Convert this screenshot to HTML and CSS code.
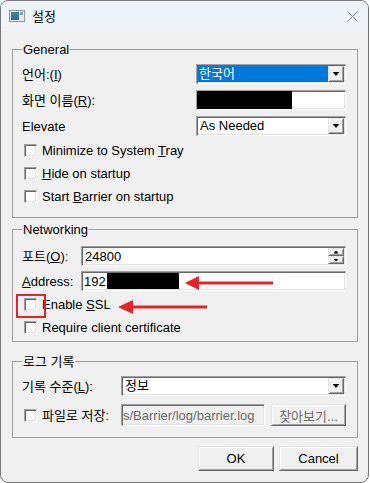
FILE: index.html
```html
<!DOCTYPE html>
<html lang="ko">
<head>
    <meta charset="UTF-8">
    <meta name="viewport" content="width=device-width, initial-scale=1.0">
    <title>설정</title>
    <link rel="stylesheet" href="styles.css">
</head>
<body>
    <div class="window">
        <div class="titlebar">
            <svg class="app-icon" width="16" height="12" viewBox="0 0 16 12">
                <defs>
                    <linearGradient id="ig" x1="0" y1="0" x2="0" y2="1">
                        <stop offset="0" stop-color="#3f8f86"/>
                        <stop offset="1" stop-color="#2a63a8"/>
                    </linearGradient>
                </defs>
                <rect x="0.5" y="0.5" width="15" height="11" fill="#e4e9ec" stroke="#8d9aa4"/>
                <rect x="2" y="2" width="8" height="8" fill="url(#ig)"/>
                <rect x="11" y="2" width="3" height="3" fill="#7aa6d6"/>
            </svg>
            <span class="title">설정</span>
            <svg class="close" width="11" height="11" viewBox="0 0 11 11">
                <path d="M0.5 0.5 L10.5 10.5 M10.5 0.5 L0.5 10.5" stroke="#8c8c8c" stroke-width="1"/>
            </svg>
        </div>

        <div class="content">
            <fieldset class="group general">
                <legend>General</legend>
                <div class="row">
                    <span class="lbl">언어:(<u>I</u>)</span>
                    <div class="combo">
                        <span class="combo-text selected">한국어</span>
                        <span class="drop"><i class="tri"></i></span>
                    </div>
                </div>
                <div class="row">
                    <span class="lbl">화면 이름(<u>R</u>):</span>
                    <div class="field">
                        <span class="redact redact-name"></span>
                    </div>
                </div>
                <div class="row">
                    <span class="lbl">Elevate</span>
                    <div class="combo">
                        <span class="combo-text">As Needed</span>
                        <span class="drop"><i class="tri"></i></span>
                    </div>
                </div>
                <div class="check-row"><span class="box"></span><span>Minimize to System <u>T</u>ray</span></div>
                <div class="check-row"><span class="box"></span><span><u>H</u>ide on startup</span></div>
                <div class="check-row"><span class="box"></span><span>Start <u>B</u>arrier on startup</span></div>
            </fieldset>

            <fieldset class="group net">
                <legend>Networking</legend>
                <div class="row">
                    <span class="lbl">포트(<u>O</u>):</span>
                    <div class="field spin">
                        <span class="field-text">24800</span>
                        <span class="spin-btns">
                            <span class="spin-btn"><i class="tri tri-up"></i></span>
                            <span class="spin-btn"><i class="tri tri-small"></i></span>
                        </span>
                    </div>
                </div>
                <div class="row">
                    <span class="lbl"><u>A</u>ddress:</span>
                    <div class="field">
                        <span class="field-text">192.</span>
                        <span class="redact redact-addr"></span>
                    </div>
                </div>
                <div class="check-row"><span class="box"></span><span>Enable <u>S</u>SL</span></div>
                <div class="check-row"><span class="box"></span><span>Require client certificate</span></div>
            </fieldset>

            <fieldset class="group log">
                <legend>로그 기록</legend>
                <div class="row">
                    <span class="lbl">기록 수준(<u>L</u>):</span>
                    <div class="combo">
                        <span class="combo-text">정보</span>
                        <span class="drop"><i class="tri"></i></span>
                    </div>
                </div>
                <div class="row file-row">
                    <span class="box"></span>
                    <span class="file-lbl">파일로 저장:</span>
                    <div class="field disabled">
                        <span class="field-text">s/Barrier/log/barrier.log</span>
                    </div>
                    <button class="btn browse">찾아보기...</button>
                </div>
            </fieldset>

            <div class="buttons">
                <button class="btn ok">OK</button>
                <button class="btn cancel">Cancel</button>
            </div>
        </div>

        <!-- screenshot annotations -->
        <svg class="marks" width="369" height="483" viewBox="0 0 369 483">
            <rect x="17" y="295" width="28" height="22" fill="none" stroke="#e52329" stroke-width="2"/>
            <path d="M197 283 H273" stroke="#e52329" stroke-width="3"/>
            <polygon points="185,283 199,276 199,290" fill="#e52329"/>
            <path d="M131 307 H207" stroke="#e52329" stroke-width="3"/>
            <polygon points="118,307 133,300 133,314" fill="#e52329"/>
        </svg>
    </div>
</body>
</html>
```

FILE: styles.css
```css
* {
    box-sizing: border-box;
}
body {
    margin: 0;
    background-color: #ffffff;
    font-family: "Liberation Sans", "Noto Sans CJK KR", sans-serif;
    font-size: 13px;
    line-height: 15px;
    color: #000000;
}
.window {
    position: relative;
    width: 369px;
    height: 483px;
    border: 1px solid #7a7a7a;
    border-radius: 8px;
    background-color: #f0f0f0;
    overflow: hidden;
    display: flex;
    flex-direction: column;
}
.titlebar {
    height: 30px;
    flex: none;
    display: flex;
    align-items: center;
    padding-left: 8px;
    background-color: #eef4f9; /* azul muy claro */
}
.app-icon {
    display: block;
}
.title {
    margin-left: 7px;
}
.close {
    display: block;
    margin-left: auto;
    margin-right: 10px;
}
.content {
    padding: 11px 10px 0 11px;
    display: flex;
    flex-direction: column;
}
u {
    text-underline-offset: 1px;
}

/* group boxes */
.group {
    margin: 0;
    border: 1px solid #a0a0a0;
    padding: 7px 11px 12px 9px;
}
.group legend {
    padding: 0 1px;
    line-height: 15px;
}
.net {
    margin-top: 4px;
    padding-top: 9px;
    padding-bottom: 5px;
}
.log {
    margin-top: 12px;
    padding-bottom: 11px;
}

.row {
    display: flex;
    align-items: center;
    height: 20px;
    margin-bottom: 6px;
}
.net .row {
    margin-bottom: 5px;
}
.check-row {
    display: flex;
    align-items: center;
    height: 17px;
    margin-bottom: 6px;
}
.check-row:last-child,
.row:last-child {
    margin-bottom: 0;
}
.lbl {
    flex: none;
    white-space: nowrap;
}
.general .lbl { width: 174px; }
.net .lbl { width: 59px; }
.log .lbl { width: 99px; }

/* sunken frames */
.field, .combo, .box {
    border: 1px solid;
    border-color: #a0a0a0 #ffffff #ffffff #a0a0a0;
    box-shadow: inset 1px 1px 0 #696969, inset -1px -1px 0 #e3e3e3;
    background-color: #ffffff;
}
.field {
    flex: 1;
    height: 20px;
    display: flex;
    align-items: center;
    overflow: hidden;
}
.field-text {
    padding-left: 2px;
    white-space: nowrap;
}
.combo {
    flex: 1;
    height: 20px;
    padding: 1px;
    display: flex;
}
.combo-text {
    flex: 1;
    padding-left: 2px;
    line-height: 16px;
}
.combo-text.selected {
    background-color: #0078d7;
    color: #ffffff;
    padding-left: 1px;
}
.drop, .spin-btn, .btn {
    border: 1px solid;
    border-color: #e3e3e3 #696969 #696969 #e3e3e3;
    box-shadow: inset 1px 1px 0 #ffffff, inset -1px -1px 0 #a0a0a0;
    background-color: #f0f0f0;
}
.drop {
    width: 16px;
    height: 16px;
    display: flex;
    align-items: center;
    justify-content: center;
}
.tri {
    display: block;
    width: 7px;
    height: 4px;
    background-color: #000000;
    clip-path: polygon(0 0, 100% 0, 50% 100%);
}
.tri-small {
    width: 5px;
    height: 3px;
}
.tri-up {
    width: 5px;
    height: 3px;
    clip-path: polygon(50% 0, 100% 100%, 0 100%);
}
.spin {
    padding: 1px;
}
.spin .field-text {
    flex: 1;
    padding-left: 2px;
}
.spin-btns {
    display: flex;
    flex-direction: column;
    width: 16px;
    height: 16px;
}
.spin-btn {
    height: 8px;
    display: flex;
    align-items: center;
    justify-content: center;
}

.redact {
    display: block;
    background-color: #000000;
}
.redact-name {
    width: 96px;
    height: 18px;
    margin-left: -1px;
}
.redact-addr {
    width: 72px;
    height: 16px;
    margin-left: -2px;
}

.box {
    flex: none;
    width: 13px;
    height: 13px;
    margin: 0 5px 0 2px;
}

.file-row {
    height: 22px;
    margin-top: 8px;
}
.file-lbl {
    width: 79px;
    flex: none;
}
.disabled {
    flex: none;
    width: 144px;
    height: 22px;
    background-color: #f0f0f0;
    color: #6d6d6d;
}
.disabled .field-text {
    padding-left: 1px;
}

.btn {
    font-family: "Liberation Sans", "Noto Sans CJK KR", sans-serif;
    font-size: 13px;
    color: #000000;
    padding: 0;
    height: 25px;
}
.browse {
    width: 75px;
    height: 22px;
    margin-left: 6px;
    color: #6d6d6d;
}
.buttons {
    display: flex;
    justify-content: flex-end;
    gap: 5px;
    margin-top: 8px;
}
.ok {
    width: 76px;
}
.cancel {
    width: 79px;
}

.marks {
    position: absolute;
    left: -1px;
    top: -1px;
    pointer-events: none;
}
```
